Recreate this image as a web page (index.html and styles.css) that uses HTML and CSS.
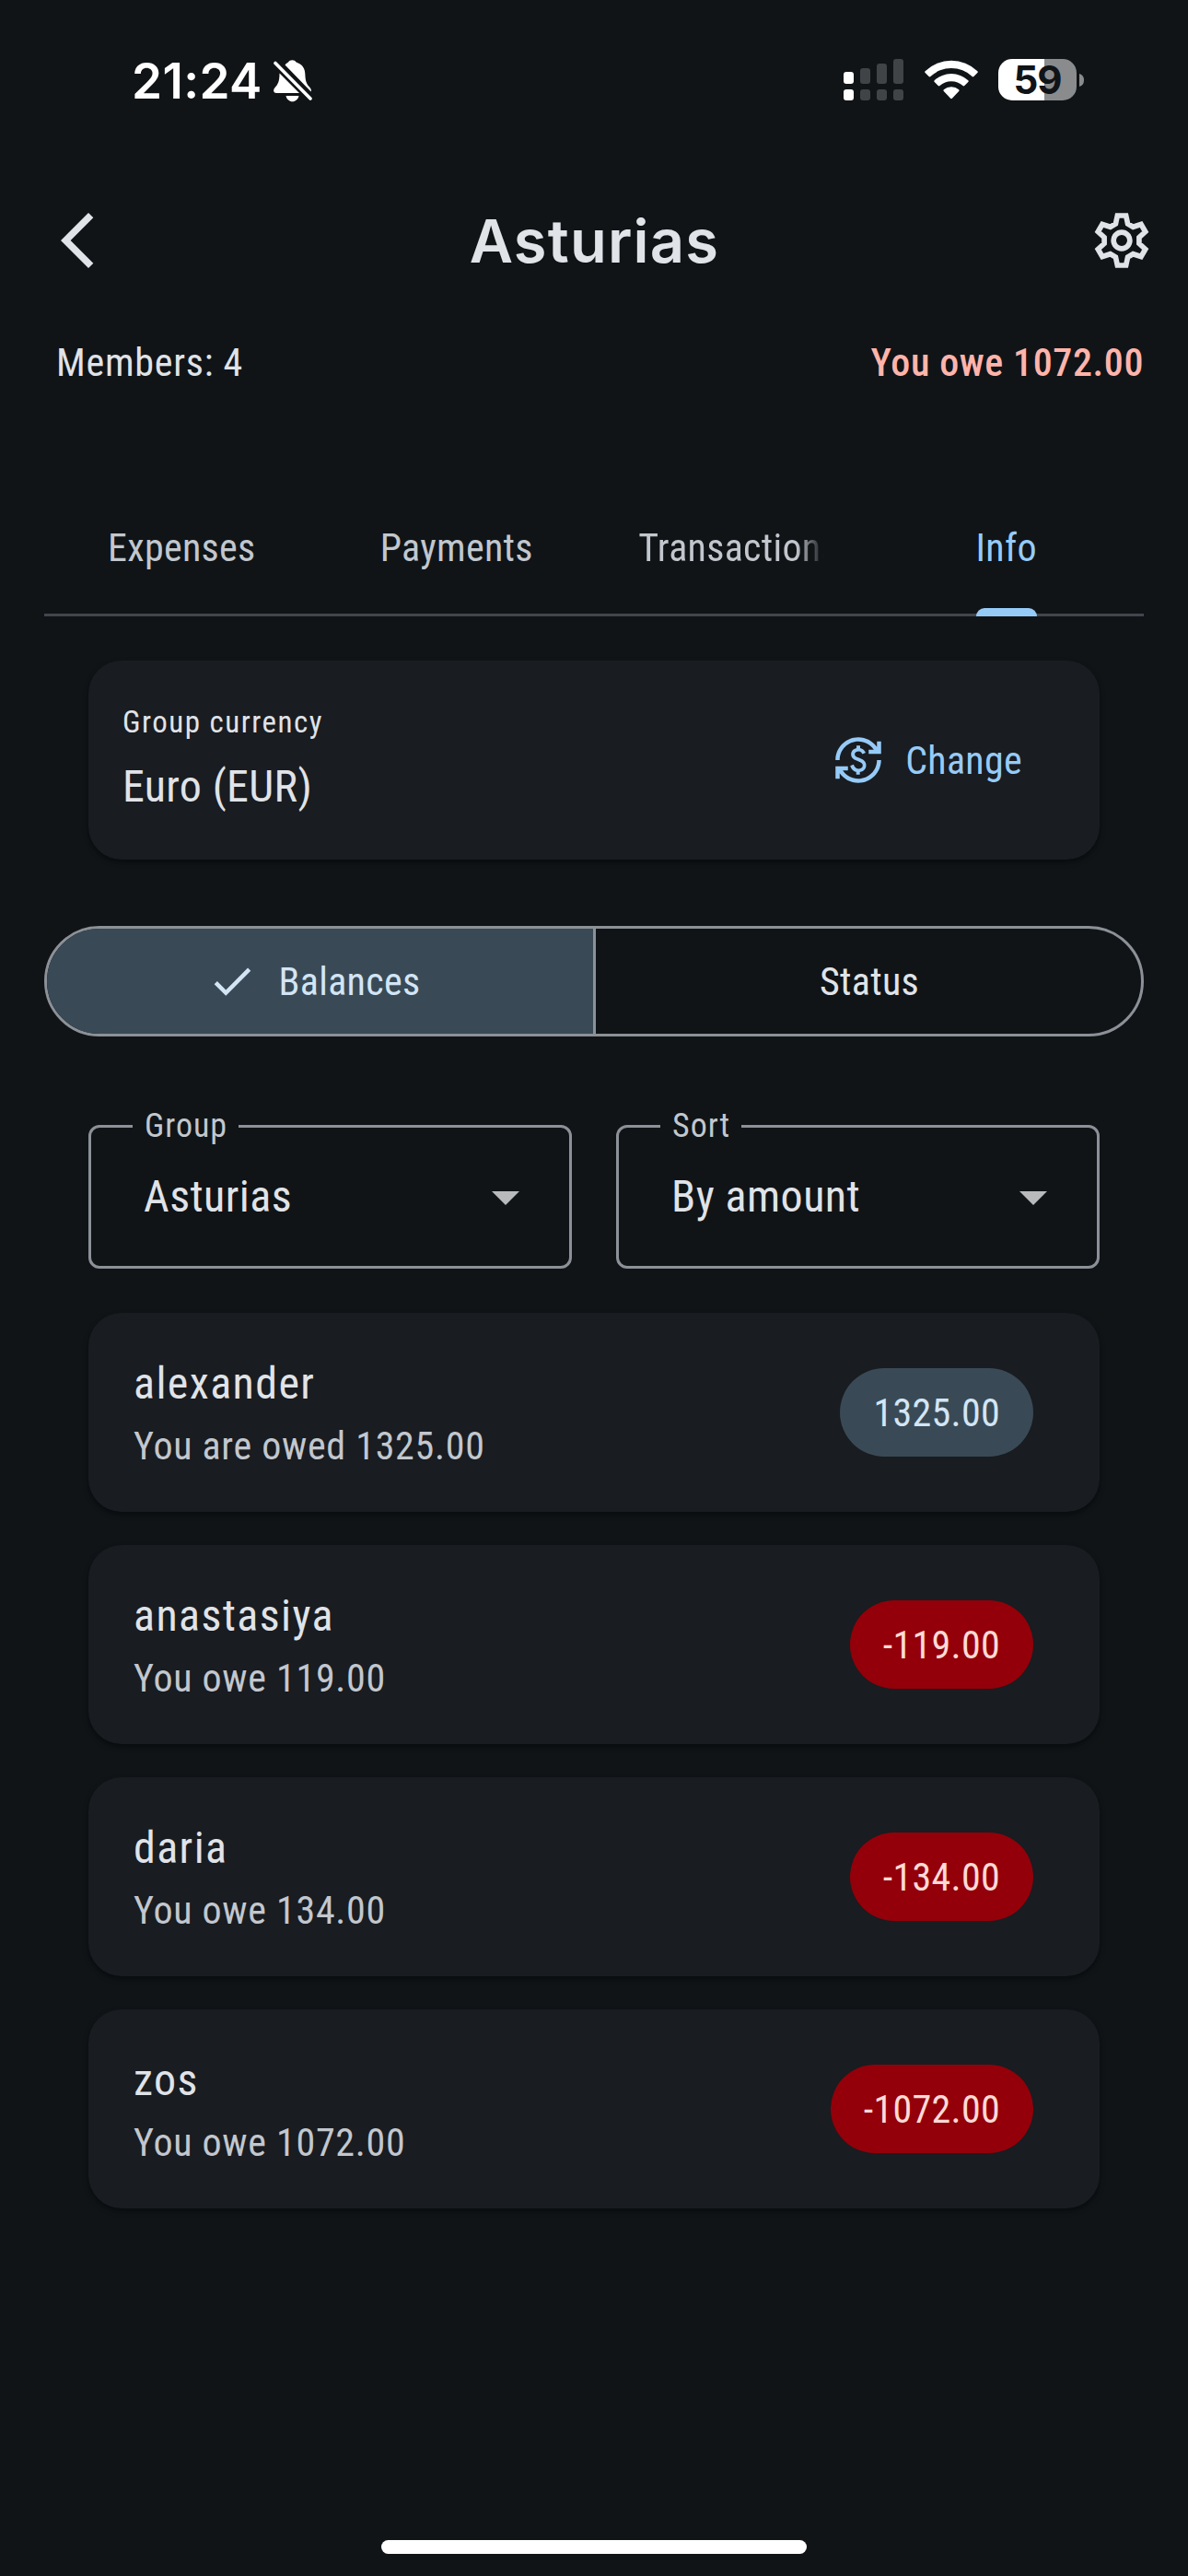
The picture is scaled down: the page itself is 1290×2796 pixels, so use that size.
FILE: index.html
```html
<!DOCTYPE html>
<html lang="en">
<head>
<meta charset="utf-8">
<title>Asturias</title>
<link rel="stylesheet" href="styles.css">
</head>
<body>
<div class="screen">
  <header class="status-bar">
    <div class="clock">
      <span class="time">21:24</span>
      <svg class="bell" viewBox="0 0 42 46">
        <path d="M12.5 5.5C14 3.800 15.300 3.300 16 2.600 17 1 18.500.3 20.300.3s3.400.7 4.300 2.300c6.500 2.200 9.400 6.500 9.700 12.400.3 6.500.8 10.500 4.800 14.500 1.800 1.900 2 3.300 1.600 5L12.500 5.500zM6.500 14.500 28 36H3.200C-.2 36-.8 32.500 1.400 30.200 5 26.500 6.500 23 6.500 14.500zM13.500 39h14c-.9 3.900-3.700 6.300-7 6.300s-6.100-2.400-7-6.300z" fill="#fff"/>
        <path d="M2 3.500 40 42" stroke="#fff" stroke-width="3.600" stroke-linecap="round"/>
      </svg>
    </div>
    <div class="indicators">
      <svg class="signal" viewBox="0 0 65 45">
        <g fill="#fff"><rect y="14" width="11" height="13" rx="3"/><rect y="33" width="11" height="12" rx="3"/></g>
        <g fill="#414447"><rect x="18" y="10" width="11" height="17" rx="3"/><rect x="36" y="5" width="11" height="22" rx="3"/><rect x="54" y="0" width="11" height="27" rx="3"/><rect x="18" y="33" width="11" height="12" rx="3"/><rect x="36" y="33" width="11" height="12" rx="3"/><rect x="54" y="33" width="11" height="12" rx="3"/></g>
      </svg>
      <svg class="wifi" viewBox="0 0 58 43" fill="#fff">
        <path d="M.6 12.200A41 41 0 0 1 57.400 12.200q.9.900 0 1.800l-4 4q-.9.800-1.800 0A33 33 0 0 0 6.400 18q-.9.800-1.800 0l-4-4q-.9-.9 0-1.800z"/>
        <path d="M10.700 22.200A27 27 0 0 1 47.300 22.200q.9.900 0 1.800l-4 4q-.9.800-1.800 0A18.500 18.500 0 0 0 16.500 28q-.9.800-1.800 0l-4-4q-.9-.9 0-1.800z"/>
        <path d="M20.800 32.200A13 13 0 0 1 37.200 32.200q.9.900 0 1.800l-7.300 7.700q-.9.900-1.800 0L20.800 34q-.9-.9 0-1.800z"/>
      </svg>
      <div class="battery"><span class="level">59</span></div>
      <svg class="battery-tip" viewBox="0 0 5 14"><path d="M0 0Q5 1.500 5 7T0 14z" fill="#8a8b8d"/></svg>
    </div>
  </header>

  <nav class="app-bar">
    <svg class="icon" viewBox="0 0 24 24"><path d="M17.770 3.770 16 2 6 12l10 10 1.770-1.770L9.540 12z" fill="#e0e3e8"/></svg>
    <h1 class="title">Asturias</h1>
    <svg class="icon" viewBox="-12 -12 24 24" fill="none" stroke="#e0e3e8">
      <path stroke-width="1.900" d="M-1.550-9H1.550L2.190-6.010 4.110-4.900 7.020-5.840 8.570-3.160 6.300-1.110V1.110L8.570 3.160 7.020 5.840 4.110 4.900 2.190 6.010 1.550 9H-1.550L-2.190 6.010-4.110 4.900-7.020 5.840-8.570 3.160-6.300 1.110V-1.110L-8.570-3.160-7.020-5.840-4.110-4.900-2.190-6.010z"/>
      <circle r="2.950" stroke-width="1.900"/>
    </svg>
  </nav>

  <div class="summary">
    <span class="members">Members: 4</span>
    <span class="debt">You owe 1072.00</span>
  </div>

  <div class="tabs">
    <div class="tab"><span class="tab-label">Expenses</span></div>
    <div class="tab"><span class="tab-label">Payments</span></div>
    <div class="tab"><span class="tab-label fade">Transactions</span></div>
    <div class="tab active"><span class="tab-label">Info</span></div>
  </div>

  <section class="card currency">
    <div class="card-text">
      <span class="caption">Group currency</span>
      <span class="value">Euro (EUR)</span>
    </div>
    <div class="change">
      <svg class="icon-small" viewBox="0 0 24 24"><path fill="#96cbf8" d="M12.890 11.100c-1.780-.59-2.640-.96-2.640-1.900 0-1.020 1.110-1.390 1.810-1.390 1.310 0 1.790.99 1.900 1.340l1.580-.67c-.15-.44-.82-1.910-2.660-2.230V5h-1.750v1.260c-2.600.56-2.620 2.850-2.620 2.960 0 2.270 2.250 2.910 3.350 3.310 1.580.56 2.280 1.070 2.280 2.030 0 1.130-1.050 1.610-1.980 1.610-1.820 0-2.340-1.870-2.400-2.090l-1.660.67c.63 2.190 2.280 2.780 2.900 2.960V19h1.750v-1.240c.52-.09 3.020-.59 3.020-3.220.01-1.390-.6-2.610-3-3.440zM3 21H1v-6h6v2H4.520c1.610 2.410 4.360 4 7.480 4 4.970 0 9-4.030 9-9h2c0 6.080-4.920 11-11 11-3.720 0-7.010-1.850-9-4.670V21zm-2-9C1 5.920 5.920 1 12 1c3.720 0 7.010 1.850 9 4.670V3h2v6h-6V7h2.480C17.870 4.590 15.120 3 12 3c-4.970 0-9 4.030-9 9H1z"/></svg>
      <span class="change-label">Change</span>
    </div>
  </section>

  <div class="segments">
    <div class="segment selected">
      <svg class="icon-small" viewBox="0 0 24 24"><path d="M9 16.170 4.830 12l-1.420 1.410L9 19 21 7l-1.410-1.410z" fill="#d3e5f5"/></svg>
      <span class="segment-label">Balances</span>
    </div>
    <div class="segment"><span class="segment-label">Status</span></div>
  </div>

  <div class="filters">
    <fieldset class="select">
      <legend>Group</legend>
      <span class="choice">Asturias</span>
      <svg class="icon" viewBox="0 0 24 24"><path d="m7 10 5 5 5-5z" fill="#b9babb"/></svg>
    </fieldset>
    <fieldset class="select">
      <legend>Sort</legend>
      <span class="choice">By amount</span>
      <svg class="icon" viewBox="0 0 24 24"><path d="m7 10 5 5 5-5z" fill="#b9babb"/></svg>
    </fieldset>
  </div>

  <main class="balances">
    <article class="card member">
      <div class="card-text"><span class="name">alexander</span><span class="note">You are owed 1325.00</span></div>
      <span class="pill">1325.00</span>
    </article>
    <article class="card member">
      <div class="card-text"><span class="name">anastasiya</span><span class="note">You owe 119.00</span></div>
      <span class="pill negative">-119.00</span>
    </article>
    <article class="card member">
      <div class="card-text"><span class="name">daria</span><span class="note">You owe 134.00</span></div>
      <span class="pill negative">-134.00</span>
    </article>
    <article class="card member">
      <div class="card-text"><span class="name">zos</span><span class="note">You owe 1072.00</span></div>
      <span class="pill negative">-1072.00</span>
    </article>
  </main>

  <div class="home-indicator"></div>
</div>
</body>
</html>
```
FILE: styles.css
```css
* { box-sizing: border-box; }
body { margin: 0; background: #101417; }
.screen {
  width: 1290px; height: 2796px;
  display: flex; flex-direction: column;
  color: #e0e3e8;
  font-family: "Roboto Condensed", Roboto, sans-serif;
  font-stretch: 75%;
  font-size: 42px; line-height: 60px;
  letter-spacing: 0.75px;
  white-space: nowrap;
}
svg { display: block; flex: none; }
.icon { width: 72px; height: 72px; }
.icon-small { width: 54px; height: 54px; }

.status-bar { height: 177px; padding: 64px 113px 0 143px; display: flex; justify-content: space-between; align-items: flex-start; }
.clock { display: flex; gap: 13px; }
.time { width: 141px; font: 600 53px/48px Inter, sans-serif; letter-spacing: 0.4px; color: #fff; }
.bell { width: 42px; height: 46px; margin-top: 1px; }
.indicators { display: flex; }
.signal { width: 65px; height: 45px; }
.wifi { width: 58px; height: 43px; margin: 1px 22px 0 23px; }
.battery { width: 85px; height: 45px; border-radius: 15px; background: linear-gradient(90deg, #fff 50px, #8a8b8d 50px); }
.level { display: block; text-align: center; font: 650 42px/46px Inter, sans-serif; letter-spacing: -1px; color: #101417; }
.battery-tip { width: 5px; height: 14px; margin: 16px 0 0 3px; }

.app-bar { height: 168px; padding: 0 36px 0 48px; display: flex; align-items: center; justify-content: space-between; }
.title { margin: 0 0 0 -11px; padding-top: 2px; font: 560 65px/82px Inter, sans-serif; letter-spacing: 1.2px; }

.summary { height: 99px; padding: 19px 48px 0 61px; display: flex; justify-content: space-between; }
.debt { color: #ffb4ab; font-weight: 500; letter-spacing: 0.6px; }

.tabs { height: 144px; margin: 81px 48px 0; display: flex; border-bottom: 3px solid #42474e; }
.tab { flex: 1 1 0; min-width: 0; padding: 0 48px; display: flex; justify-content: center; align-items: center; margin-bottom: -3px; color: #c2c7ce; letter-spacing: 0.3px; }
.tab-label { height: 144px; line-height: 140px; overflow: hidden; }
.active .tab-label { color: #96cbf8; }
.active .tab-label::after { content: ""; display: block; height: 9px; margin-top: -5px; border-radius: 9px 9px 0 0; background: #96cbf8; }
.fade { width: 202px; -webkit-mask-image: linear-gradient(90deg, #000 85%, transparent 100%); mask-image: linear-gradient(90deg, #000 85%, transparent 100%); }

.card { height: 216px; margin: 0 96px; border-radius: 36px; background: #191c20; box-shadow: 0 3px 6px rgba(0,0,0,.3), 0 3px 3px rgba(0,0,0,.12); display: flex; align-items: center; justify-content: space-between; }
.card-text { display: flex; flex-direction: column; }
.currency { margin-top: 48px; padding: 0 84px 0 37px; }
.caption { font-size: 33px; line-height: 48px; letter-spacing: 1.5px; }
.value { font-size: 48px; line-height: 72px; margin-top: 10px; letter-spacing: 0.35px; }
.change { display: flex; align-items: center; gap: 24px; color: #96cbf8; letter-spacing: 0.3px; }
.change-label { line-height: 58px; padding-top: 2px; }

.segments { height: 120px; margin: 72px 48px 0; display: flex; border: 3px solid #8c9198; border-radius: 60px; overflow: hidden; letter-spacing: 0.3px; }
.segment { flex: 1; display: flex; align-items: center; justify-content: center; gap: 24px; padding-left: 2px; }
.selected { flex: 0 0 596px; padding: 0 14px 0 0; background: #394a56; color: #d3e5f5; border-right: 3px solid #8c9198; }
.segment-label { line-height: 58px; padding-top: 2px; }

.filters { display: flex; gap: 48px; margin: 72px 96px 0; height: 180px; }
.select { flex: 1; min-width: 0; margin: 0; padding: 0 33px 24px 45px; border: 3px solid #8c9198; border-radius: 12px; display: flex; align-items: center; justify-content: space-between; }
.select legend { padding: 0 12px 0 13px; height: 51px; font-size: 36px; line-height: 51px; letter-spacing: 1px; color: #c2c7ce; }
.choice { margin-left: 12px; font-size: 48px; line-height: 72px; letter-spacing: 0.45px; }

.balances { margin-top: 48px; display: flex; flex-direction: column; gap: 36px; }
.member { padding: 0 72px 0 49px; }
.name { font-size: 48px; line-height: 70px; letter-spacing: 1.4px; }
.note { color: #c2c7ce; line-height: 60px; margin-top: 3px; letter-spacing: 0.7px; }
.pill { height: 96px; padding: 0 36px; border-radius: 48px; background: #394a56; color: #d3e5f5; line-height: 98px; letter-spacing: 0.3px; }
.negative { background: #930009; color: #ffdad6; }

.home-indicator { width: 462px; height: 15px; border-radius: 8px; background: #fff; margin: auto auto 24px; }
```
